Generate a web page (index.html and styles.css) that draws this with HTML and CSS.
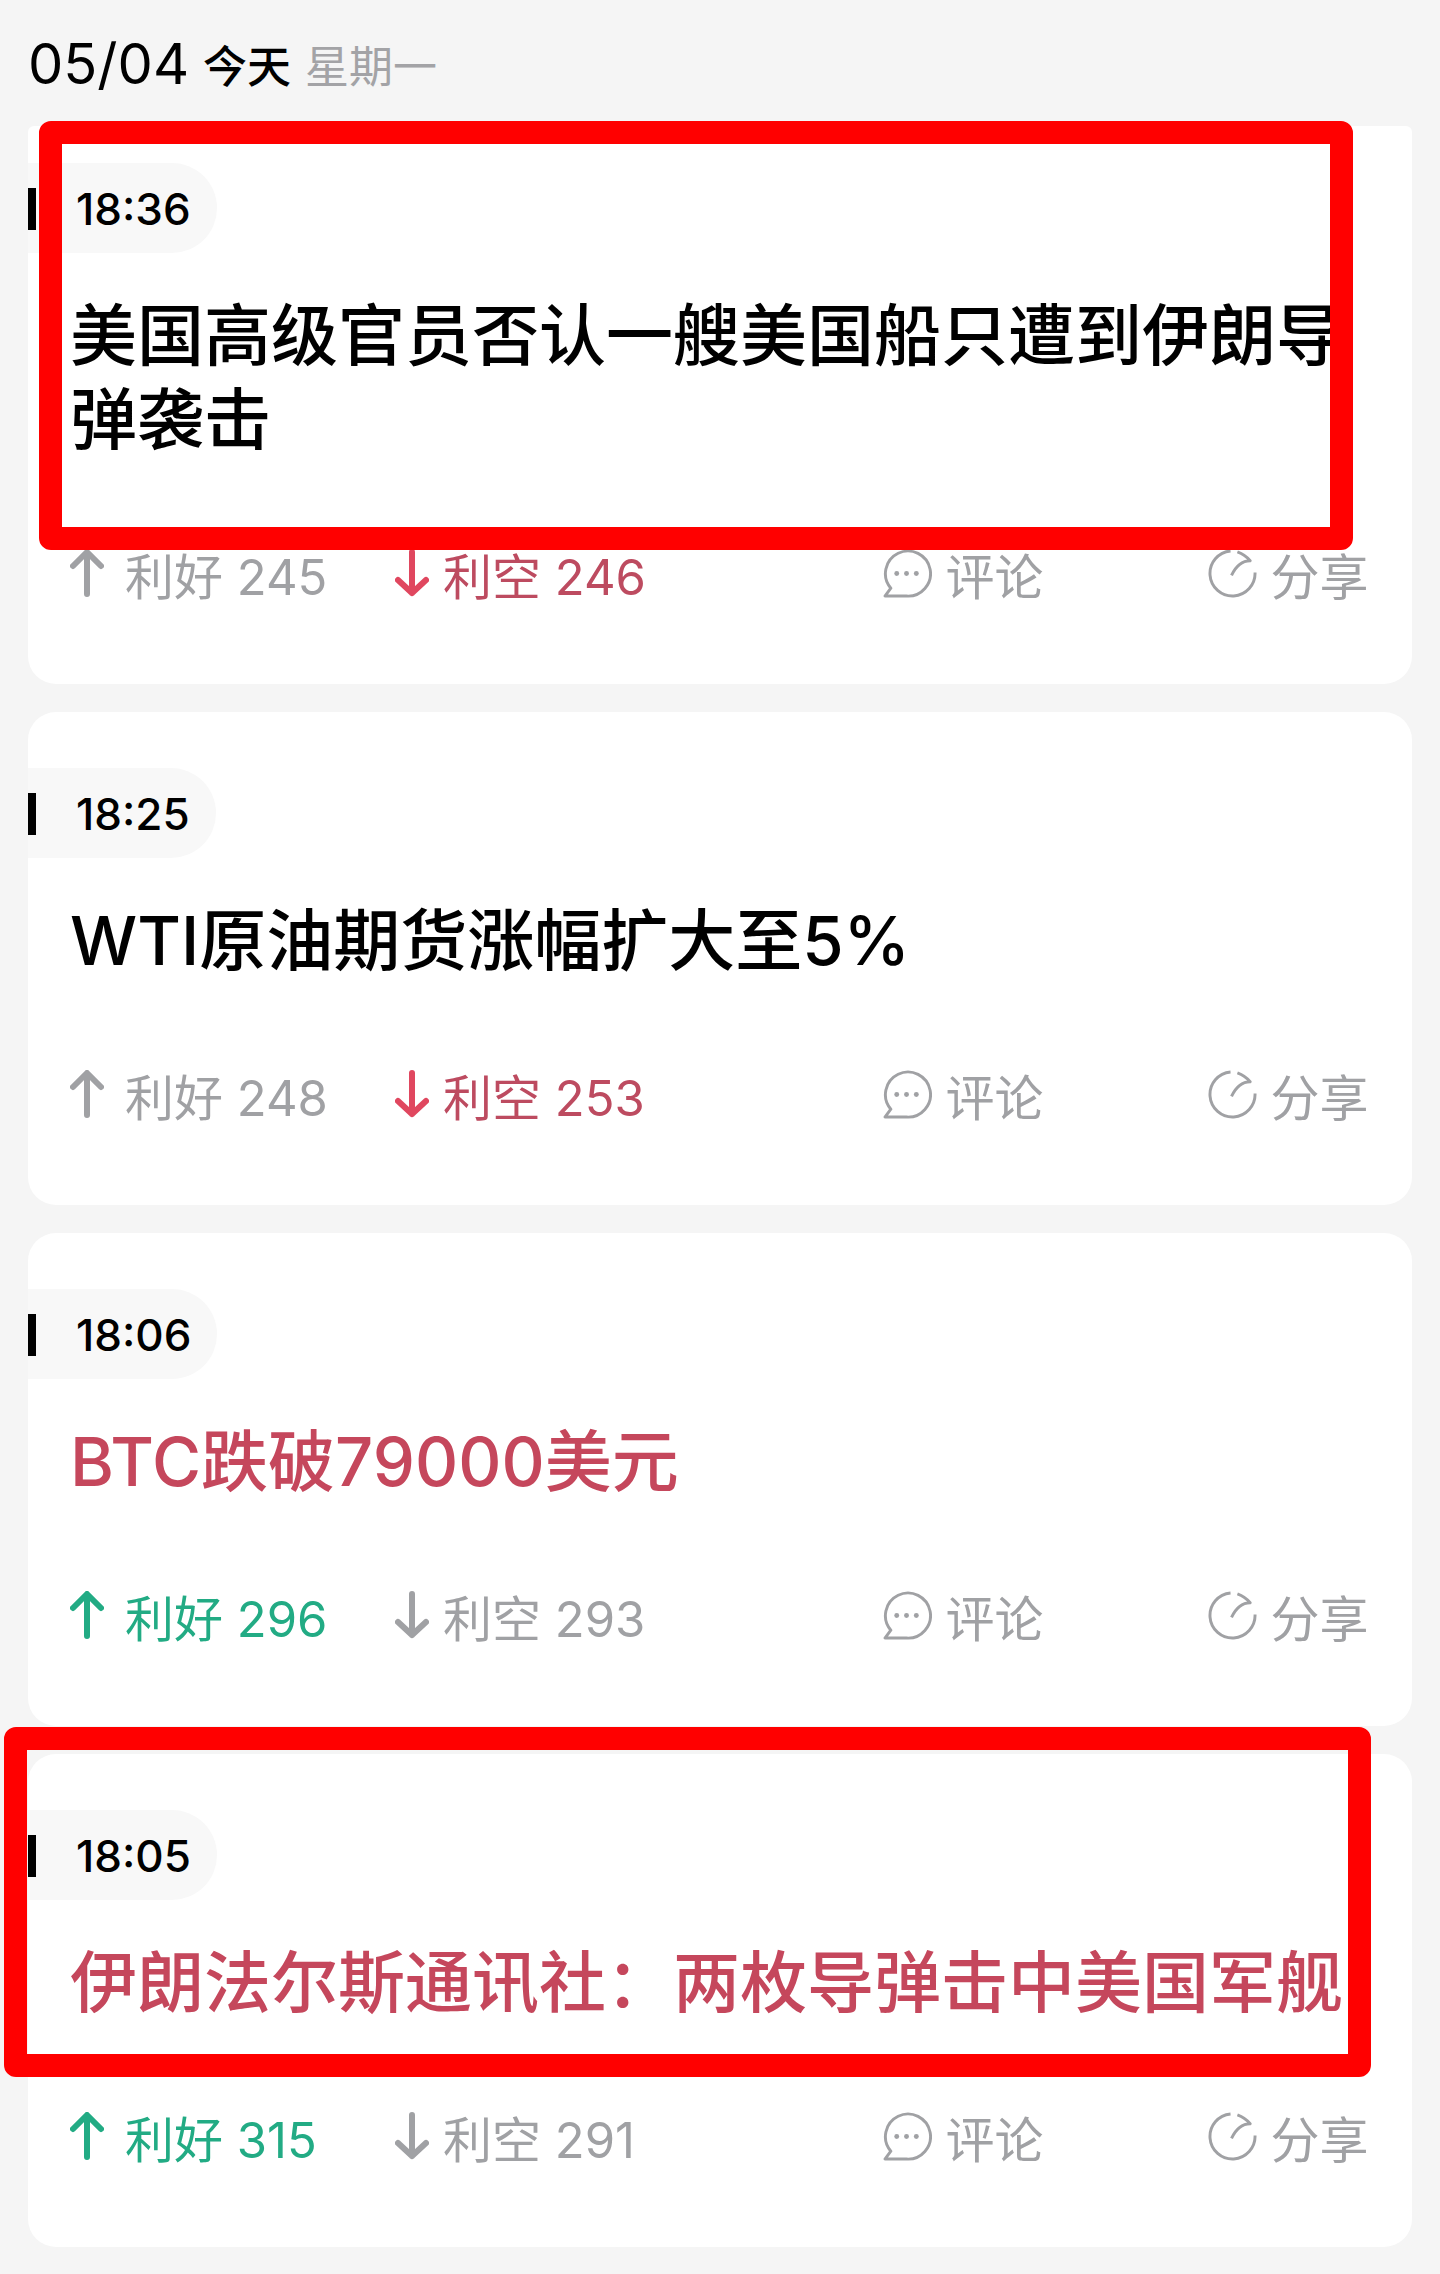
FILE: index.html
```html
<!DOCTYPE html>
<html lang="zh-CN">
<head>
    <meta charset="UTF-8">
    <meta name="viewport" content="width=device-width, initial-scale=1.0">
    <title>快讯</title>
    <link rel="stylesheet" href="styles.css">
</head>
<body>
    <!-- icons -->
    <svg class="sprite" aria-hidden="true">
        <symbol id="up" viewBox="0 0 34 48">
            <path d="M17 45V4M3 17L17 3L31 17" fill="none" stroke="currentColor" stroke-width="6" stroke-linecap="round" stroke-linejoin="round"/>
        </symbol>
        <symbol id="down" viewBox="0 0 34 48">
            <path d="M17 3V44M3 31L17 44L31 31" fill="none" stroke="currentColor" stroke-width="6" stroke-linecap="round" stroke-linejoin="round"/>
        </symbol>
        <symbol id="comment" viewBox="0 0 50 50">
            <path d="M24 48H2L8 40A23 23 0 1 1 24 48Z" fill="none" stroke="currentColor" stroke-width="3" stroke-linejoin="round"/>
            <circle cx="14" cy="25" r="2.500" fill="currentColor"/>
            <circle cx="24" cy="25" r="2.500" fill="currentColor"/>
            <circle cx="34" cy="25" r="2.500" fill="currentColor"/>
        </symbol>
        <symbol id="share" viewBox="0 0 50 50">
            <path d="M23 2A23 23 0 1 0 48 24M30 3Q38 6 43 12Q31 12 24 27" fill="none" stroke="currentColor" stroke-width="3" stroke-linejoin="round"/>
        </symbol>
    </svg>

    <header class="date-bar">
        <span class="date">05/04</span>
        <span class="today">今天</span>
        <span class="weekday">星期一</span>
    </header>

    <main class="news-list">
        <article class="card card-first">
            <time class="time">18:36</time>
            <h2 class="title">美国高级官员否认一艘美国船只遭到伊朗导弹袭击</h2>
            <div class="actions">
                <button class="btn btn-up"><svg class="arrow"><use href="#up"/></svg>利好 245</button>
                <button class="btn btn-down active"><svg class="arrow"><use href="#down"/></svg>利空 246</button>
                <button class="btn"><svg class="icon"><use href="#comment"/></svg>评论</button>
                <button class="btn"><svg class="icon"><use href="#share"/></svg>分享</button>
            </div>
            <div class="mark mark-top"></div>
        </article>

        <article class="card">
            <time class="time">18:25</time>
            <h2 class="title">WTI原油期货涨幅扩大至5%</h2>
            <div class="actions">
                <button class="btn btn-up"><svg class="arrow"><use href="#up"/></svg>利好 248</button>
                <button class="btn btn-down active"><svg class="arrow"><use href="#down"/></svg>利空 253</button>
                <button class="btn"><svg class="icon"><use href="#comment"/></svg>评论</button>
                <button class="btn"><svg class="icon"><use href="#share"/></svg>分享</button>
            </div>
        </article>

        <article class="card">
            <time class="time">18:06</time>
            <h2 class="title important">BTC跌破79000美元</h2>
            <div class="actions">
                <button class="btn btn-up active"><svg class="arrow"><use href="#up"/></svg>利好 296</button>
                <button class="btn btn-down"><svg class="arrow"><use href="#down"/></svg>利空 293</button>
                <button class="btn"><svg class="icon"><use href="#comment"/></svg>评论</button>
                <button class="btn"><svg class="icon"><use href="#share"/></svg>分享</button>
            </div>
        </article>

        <article class="card">
            <time class="time">18:05</time>
            <h2 class="title important">伊朗法尔斯通讯社：两枚导弹击中美国军舰</h2>
            <div class="actions">
                <button class="btn btn-up active"><svg class="arrow"><use href="#up"/></svg>利好 315</button>
                <button class="btn btn-down"><svg class="arrow"><use href="#down"/></svg>利空 291</button>
                <button class="btn"><svg class="icon"><use href="#comment"/></svg>评论</button>
                <button class="btn"><svg class="icon"><use href="#share"/></svg>分享</button>
            </div>
            <div class="mark mark-bottom"></div>
        </article>
    </main>
</body>
</html>
```
FILE: styles.css
```css
* { box-sizing: border-box; }
body { margin: 0; background-color: #f5f5f5; color: #000; font-family: Inter, "Noto Sans CJK SC", sans-serif; }
.sprite { display: none; }

.date-bar { display: flex; align-items: center; gap: 14px; height: 126px; padding: 2px 28px 0; font-size: 44px; }
.date { font-size: 56px; }
.today { font-weight: 500; }
.weekday { color: #a3a3a6; }

.news-list { display: flex; flex-direction: column; gap: 28px; padding: 0 28px 27px; }
.card { position: relative; padding: 56px 0 80px; background: #fff; border-radius: 28px; }
.card-first { padding-top: 37px; border-radius: 6px 6px 28px 28px; }

.time { display: flex; align-items: center; width: fit-content; height: 90px; padding: 2px 26px 0 0; background: #f8f8f8; border-radius: 0 45px 45px 0; font-size: 44px; font-weight: 500; }
.time::before { content: ""; width: 8px; height: 42px; margin-right: 40px; background: #000; }
.title { margin: 41px 0 81px; padding: 0 42px; font-size: 67px; font-weight: 500; line-height: 84px; }
.important { color: #c5475c; }

.actions { display: grid; grid-template-columns: 2fr 3fr 2fr 1fr; padding: 0 42px 1px; }
.btn { display: flex; align-items: center; gap: 14px; height: 60px; padding: 0; border: none; background: none; color: #a0a1a4; font-family: inherit; font-size: 49px; white-space: nowrap; cursor: pointer; }
.btn-up { gap: 21px; }
.btn-up.active { color: #22ab84; }
.btn-down.active { color: #bd4b60; }
.btn-down.active .arrow { color: #e0475f; }
.arrow { width: 34px; height: 48px; flex-shrink: 0; }
.icon { width: 49px; height: 49px; flex-shrink: 0; }

/* red highlight frames */
.mark { position: absolute; border: 23px solid #f00; border-radius: 12px; pointer-events: none; }
.mark-top { top: -5px; right: 59px; bottom: 134px; left: 11px; }
.mark-bottom { top: -27px; right: 41px; bottom: 170px; left: -24px; }
```
